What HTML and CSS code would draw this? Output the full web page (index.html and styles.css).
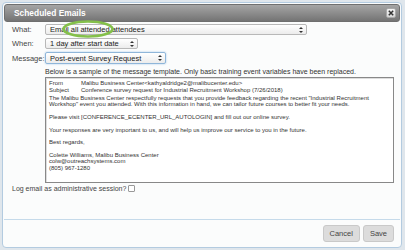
FILE: index.html
```html
<!DOCTYPE html>
<html>
<head>
<meta charset="utf-8">
<link rel="stylesheet" href="styles.css">
</head>
<body>
<div class="dialog">
  <div class="titlebar">
    <span class="title">Scheduled Emails</span>
    <span class="close"><svg width="6" height="6" viewBox="0 0 6 6"><path d="M0.8 0.8 L5.2 5.2 M5.2 0.8 L0.8 5.2" stroke="#333" stroke-width="1.5"/></svg></span>
  </div>
  <div class="content">
    <div class="form">
      <label class="lbl">What:</label>
      <div class="sel sel-what"><span>Email all attended attendees</span><i class="arr"></i><svg class="circle" width="52" height="18" viewBox="0 0 52 18"><ellipse cx="26" cy="9" rx="24.5" ry="7.5" fill="none" stroke="#84c04a" stroke-width="2.6"/></svg></div>
      <label class="lbl">When:</label>
      <div class="sel sel-when"><span>1 day after start date</span><i class="arr"></i></div>
      <label class="lbl">Message:</label>
      <div class="sel sel-msg"><span>Post-event Survey Request</span><i class="arr"></i></div>
      <span></span>
      <div class="preview">
        <p class="note">Below is a sample of the message template. Only basic training event variables have been replaced.</p>
        <div class="mail">
          <div class="hdr"><span class="k">From</span><span>Malibu Business Center&lt;kathyaldridge2@malibucenter.edu&gt;</span></div>
          <div class="hdr"><span class="k">Subject</span><span>Conference survey request for Industrial Recruitment Workshop (7/26/2018)</span></div>
          <p>The Malibu Business Center respectfully requests that you provide feedback regarding the recent "Industrial Recruitment Workshop" event you attended. With this information in hand, we can tailor future courses to better fit your needs.</p>
          <p>Please visit [CONFERENCE_ECENTER_URL_AUTOLOGIN] and fill out our online survey.</p>
          <p>Your responses are very important to us, and will help us improve our service to you in the future.</p>
          <p>Best regards,</p>
          <p>Colette Williams, Malibu Business Center<br>colw@outreachsystems.com<br>(805) 967-1280</p>
        </div>
      </div>
    </div>
    <div class="log">Log email as administrative session? <span class="cb"></span></div>
  </div>
  <div class="footer">
    <button class="btn">Cancel</button>
    <button class="btn">Save</button>
  </div>
</div>
</body>
</html>
```
FILE: styles.css
```css
html, body { margin: 0; padding: 0; }
body {
  width: 405px; height: 250px; overflow: hidden;
  background: #dfe6ec;
  font-family: "Liberation Sans", Arial, sans-serif;
  color: #333;
}
.dialog {
  box-sizing: border-box;
  margin: 2px 0 0 2px;
  width: 400px; height: 246px;
  border: 1px solid #b3cbe0;
  border-radius: 4px;
  background: #fbfcfc;
  padding: 1px;
  display: flex; flex-direction: column;
}
.titlebar {
  height: 16px;
  border-radius: 3px;
  background: linear-gradient(#a5a5a5, #747474);
  border: 1px solid #6f6f6f;
  display: flex; align-items: center; justify-content: space-between;
  padding: 0 3px 0 9px;
}
.title { color: #fff; font-weight: bold; font-size: 8.4px; }
.close {
  width: 10px; height: 10px; border-radius: 2px;
  background: linear-gradient(#f4f4f4, #d8d8d8);
  border: 1px solid #aaa; box-sizing: border-box;
  display: flex; align-items: center; justify-content: center;
}
.content { padding: 2px 0 0 8px; flex: 1; }
.form {
  display: grid;
  grid-template-columns: 33px auto;
  row-gap: 3px;
  align-items: center;
  justify-items: start;
}
.lbl { font-size: 7.5px; color: #444; }
.sel {
  position: relative;
  box-sizing: border-box;
  height: 11px;
  border: 1px solid #b8b8b8;
  border-radius: 2px;
  background: linear-gradient(#ffffff, #ececec);
  font-size: 7.5px; color: #222;
  display: flex; align-items: center; justify-content: space-between;
  padding: 0 3px 0 4px;
}
.sel-what { width: 262px; }
.sel-when { width: 93px; }
.sel-msg { width: 121px; height: 12px; border-color: #8fb6d9; box-shadow: 0 0 2px #9cc3e6; }
.arr { width: 4px; height: 6px; position: relative; }
.arr::before, .arr::after {
  content: ""; position: absolute; left: 0;
  border-left: 2px solid transparent; border-right: 2px solid transparent;
}
.arr::before { top: 0; border-bottom: 2.5px solid #333; }
.arr::after { bottom: 0; border-top: 2.5px solid #333; }
.circle {
  position: absolute; left: 16px; top: -5px;
  overflow: visible;
}
.preview { grid-column: 2; margin-top: 1px; }
.note { margin: 0 0 2px; font-size: 7px; color: #333; }
.mail {
  box-sizing: border-box;
  width: 349px; height: 106px;
  border: 1px solid #888;
  box-shadow: inset 1px 1px 0 #ddd;
  background: #fff;
  padding: 2px 3px;
  font-size: 6px; color: #333; line-height: 6.6px;
}
.hdr { display: flex; height: 7.4px; }
.k { width: 32px; flex: none; }
.mail p { margin: 0 0 6px; }
.log { margin-top: 2px; font-size: 7px; color: #444; display: flex; align-items: center; gap: 2px; }
.cb { width: 5px; height: 5px; border: 1px solid #999; border-radius: 1px; background: #fff; }
.footer {
  height: 26px;
  border-top: 1px solid #c5daea;
  display: flex; justify-content: flex-end; align-items: center;
  gap: 3px; padding-right: 6px;
}
.btn {
  height: 17px; padding: 0 6px;
  border: 1px solid #c9c9c9; border-radius: 3px;
  background: #dcdcdc;
  font-family: "Liberation Sans", Arial, sans-serif;
  font-size: 7.5px; color: #444;
}
```
